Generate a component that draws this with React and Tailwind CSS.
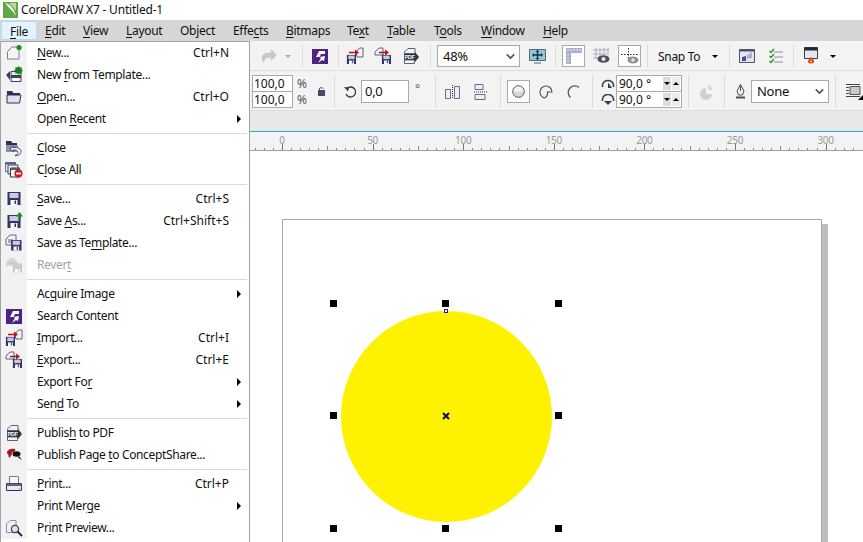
import { ChevronDown } from 'lucide-react';

const topMenu = [
  { label: '&File', box: 'w-[36px] pl-[8px] bg-[#e5f3fd] border border-[#b5daf5]' },
  { label: '&Edit', box: 'w-[38px] pl-[8px]' },
  { label: '&View', box: 'w-[43px] pl-[8px]' },
  { label: '&Layout', box: 'w-[54px] pl-[8px]' },
  { label: 'Ob&ject', box: 'w-[53px] pl-[8px]' },
  { label: 'Effe&cts', box: 'w-[53px] pl-[8px]' },
  { label: '&Bitmaps', box: 'w-[61px] pl-[8px]' },
  { label: 'Te&xt', box: 'w-[40px] pl-[8px]' },
  { label: '&Table', box: 'w-[47px] pl-[8px]' },
  { label: 'T&ools', box: 'w-[47px] pl-[8px]' },
  { label: '&Window', box: 'w-[62px] pl-[8px]' },
  { label: '&Help', box: 'w-[40px] pl-[8px]' },
];

function Label({ text }) {
  const i = text.indexOf('&');
  if (i < 0) return <span>{text}</span>;
  return (
    <span>
      {text.slice(0, i)}
      <u className="underline-offset-2">{text[i + 1]}</u>
      {text.slice(i + 2)}
    </span>
  );
}

// small floppy used by a lot of the menu icons
function Floppy({ x = 0, y = 0, s = 1, c = '#2f3567' }) {
  return (
    <g transform={`translate(${x} ${y}) scale(${s})`}>
      <path d="M2 2h13v13H2z" fill={c} />
      <path d="M4 3h9v5H4z" fill="#c9cce0" />
      <path d="M5 10h7v5H5z" fill="#fff" />
      <path d="M9 10.5h1.6v3.5H9z" fill={c} />
    </g>
  );
}

function Doc({ x = 0, y = 0, c = '#6c7183', f = '#f4f4f6' }) {
  return <path transform={`translate(${x} ${y})`} d="M.5 4.500 4.500.5h6v10H.5z" fill={f} stroke={c} strokeWidth="1" />;
}

function Arrow({ x = 0, y = 0 }) {
  return <path transform={`translate(${x} ${y})`} d="M0 2.200h6V0l4 3-4 3V3.800H0z" fill="#b5121b" />;
}

function Ico({ children, w = 18, h = 18 }) {
  return (
    <svg width={w} height={h} viewBox={`0 0 ${w} ${h}`} className="block shrink-0">
      {children}
    </svg>
  );
}

const searchIcon = (
  <Ico w={17} h={17}>
    <path d="M0 1h16v15H0z" fill="#4b2384" />
    <path d="M13 3H7L4 9h3.500L9 6h4z" fill="#fff" />
    <path d="M13 8l-1 5-2-1-4 3 3-5-1.500-1z" fill="#fff" />
  </Ico>
);

const icons = {
  new: (
    <Ico>
      <path d="M2.500 7.500 7 3h7v12H2.500z" fill="#f5f5f7" stroke="#7b7f90" />
      <circle cx="14" cy="3.500" r="2.600" fill="#1f8a1f" />
    </Ico>
  ),
  template: (
    <Ico>
      <path d="M1 9l4-4v9z" fill="#3a4060" />
      <path d="M6 5.500h10v10H6z" fill="#e8e9ef" stroke="#3a4060" />
      <path d="M6 9h10v3H6z" fill="#3a4060" />
      <path d="M8 12.500h6v2H8z" fill="#fff" />
      <path d="M13.500 0l1.200 1.600 2-.4-.2 2 1.500 1.300-1.500 1.200.2 2-2-.4-1.200 1.600-1.200-1.600-2 .4.2-2L9 4.500l1.500-1.300-.2-2 2 .4z" fill="#1c7d1c" />
    </Ico>
  ),
  open: (
    <Ico>
      <path d="M2 3h5l1.500 2H15v3H2z" fill="#2b3158" />
      <path d="M2 7h14l-1.500 8H2z" fill="#dfe1ea" stroke="#2b3158" />
    </Ico>
  ),
  close: (
    <Ico>
      <path d="M1 2h5l1.500 2H12v3H1z" fill="#2b3158" />
      <path d="M1 6h12l-1 7H1z" fill="#8d92ab" />
      <path d="M8 7.500 5 10l3 2.500V11c3-.5 5 .6 5 2.500 0 1.600-1.400 2.800-3 3 3.500.5 6-1.400 6-3.800 0-3-3-4.600-8-4.200z" fill="#fff" stroke="#2b3158" strokeWidth=".9" />
    </Ico>
  ),
  closeAll: (
    <Ico>
      <path d="M.5 1.500h10v9H.5z" fill="#eee" stroke="#6c7183" />
      <path d="M3 4h10v9H3z" fill="#eee" stroke="#3a4060" />
      <path d="M5.500 7h9v9h-9z" fill="#f6f6f6" stroke="#2b3158" />
      <path d="M.5 1.500h10v2H.5zM5.500 7h9v2h-9z" fill="#565b78" />
      <circle cx="13.500" cy="12.500" r="4" fill="#d8141c" />
      <path d="M11 11.600h5v1.800h-5z" fill="#fff" />
    </Ico>
  ),
  save: (
    <Ico>
      <Floppy x={0.5} y={0} />
    </Ico>
  ),
  saveAs: (
    <Ico>
      <Floppy x={0.5} y={1} />
      <path d="M13 0h2.500v2.500H18L14.500 7 11 2.500h2z" transform="rotate(180 14.500 3.500)" fill="#1f8a1f" />
    </Ico>
  ),
  saveTemplate: (
    <Ico>
      <Doc x={0.5} y={0.5} c="#5d6278" />
      <path d="M3 6h5M3 8h4" stroke="#5d6278" />
      <Floppy x={4.5} y={4.5} s={0.8} />
    </Ico>
  ),
  revert: (
    <Ico>
      <path d="M1 6 5 2h5v8H1z" fill="#d6d6d6" />
      <path d="M4 6h6V4l3 3-3 3V8H4z" fill="#c9c9c9" />
      <Floppy x={6.5} y={6} s={0.7} c="#c9c9c9" />
    </Ico>
  ),
  search: searchIcon,
  import: (
    <Ico>
      <path d="M10 5 13.500 1H17v9h-6z" fill="#f2f2f5" stroke="#5d6278" />
      <Arrow x={3} y={2.5} />
      <Floppy x={-0.5} y={6.5} s={0.7} />
    </Ico>
  ),
  export: (
    <Ico>
      <path d="M1 5 5 1h4v7H1z" fill="#f2f2f5" stroke="#5d6278" />
      <Arrow x={5} y={2.5} />
      <Floppy x={6.5} y={6.5} s={0.7} />
    </Ico>
  ),
  pdf: (
    <Ico>
      <path d="M2.500 5 6 1.500h7v5H2.500z" fill="#f4f4f6" stroke="#5d6278" />
      <path d="M2 7h11V5l4 5-4 5v-2H2z" fill="#2b2f45" />
      <text x="2.500" y="12.200" fontSize="5.500" fontWeight="700" fill="#fff" fontFamily="Liberation Sans, sans-serif">PDF</text>
      <path d="M2.500 13v3.500h10V13z" fill="#f4f4f6" stroke="#5d6278" />
    </Ico>
  ),
  concept: (
    <Ico>
      <path d="M2 6c1-3 5-4 8-3 1 2-1 3-3 3.500 0 2-1 4-3 5.500-.5-2-.5-3-1-4-1 0-1-1-1-2z" fill="#a5161c" />
      <ellipse cx="11.500" cy="8" rx="4" ry="2.800" fill="#111" />
      <path d="M14 10l3 4-4-2.500z" fill="#111" />
    </Ico>
  ),
  print: (
    <Ico>
      <path d="M4.500 1.500h9v7h-9z" fill="#f7f7f7" stroke="#777c8c" />
      <path d="M1.500 8.500h15v7h-15z" fill="#e8e9ee" stroke="#2b3158" />
      <path d="M1.500 8.500h15V11h-15z" fill="#5e6480" />
      <path d="M13.500 13h2v1h-2z" fill="#e5b320" />
    </Ico>
  ),
  preview: (
    <Ico>
      <path d="M1.500 5 5 1.500h6v12H1.500z" fill="#f0f0f4" stroke="#8a8fa2" />
      <circle cx="10" cy="10" r="3.600" fill="#dfe3ec" stroke="#3a4060" strokeWidth="1.300" />
      <path d="M12.500 12.500l4.500 4.500" stroke="#2b2f45" strokeWidth="2" />
    </Ico>
  ),
};

const menuGroups = [
  [
    { icon: 'new', label: '&New...', keys: 'Ctrl+N' },
    { icon: 'template', label: 'New &from Template...' },
    { icon: 'open', label: '&Open...', keys: 'Ctrl+O' },
    { label: 'Open &Recent', sub: true },
  ],
  [
    { icon: 'close', label: '&Close' },
    { icon: 'closeAll', label: 'C&lose All' },
  ],
  [
    { icon: 'save', label: '&Save...', keys: 'Ctrl+S' },
    { icon: 'saveAs', label: 'Save &As...', keys: 'Ctrl+Shift+S' },
    { icon: 'saveTemplate', label: 'Save as Te&mplate...' },
    { icon: 'revert', label: 'Rever&t', off: true },
  ],
  [
    { label: 'Ac&quire Image', sub: true },
    { icon: 'search', label: 'Search Content' },
    { icon: 'import', label: '&Import...', keys: 'Ctrl+I' },
    { icon: 'export', label: '&Export...', keys: 'Ctrl+E' },
    { label: 'Export Fo&r', sub: true },
    { label: 'Sen&d To', sub: true },
  ],
  [
    { icon: 'pdf', label: 'Publis&h to PDF' },
    { icon: 'concept', label: 'Publish Page &to ConceptShare...' },
  ],
  [
    { icon: 'print', label: '&Print...', keys: 'Ctrl+P' },
    { label: 'Print Mer&ge', sub: true },
    { icon: 'preview', label: 'Pr&int Preview...' },
  ],
];

function MenuRow({ item }) {
  return (
    <div className={`flex h-[22px] items-center ${item.off ? 'text-[#a3a3a3]' : 'text-[#111]'}`}>
      <div className="flex h-full w-[26px] shrink-0 items-center justify-center bg-[#f2f2f2]">
        {item.icon && icons[item.icon]}
      </div>
      <div className="ml-[10px] flex-1 whitespace-nowrap tracking-[-0.35px]">
        <Label text={item.label} />
      </div>
      {item.keys && <div className="mr-[20px] whitespace-nowrap tracking-normal">{item.keys}</div>}
      {item.sub && <div className="mr-[8px] h-0 w-0 border-y-[4px] border-l-[4px] border-y-transparent border-l-black" />}
    </div>
  );
}

function FileMenu() {
  return (
    <div className="absolute bottom-0 left-0 top-[41px] z-10 w-[250px] border-x border-t border-[#a3a3a3] bg-white">
      {menuGroups.map((group, i) => (
        <div key={i}>
          {i > 0 && (
            <div className="flex h-[7px]">
              <div className="w-[26px] bg-[#f2f2f2]" />
              <div className="mr-[2px] mt-[3px] h-px flex-1 bg-[#d9d9d9]" />
            </div>
          )}
          {group.map((item) => (
            <MenuRow key={item.label} item={item} />
          ))}
        </div>
      ))}
    </div>
  );
}

function Sep({ cls }) {
  return <div className={`w-px shrink-0 self-stretch bg-[#dcdcdc] ${cls}`} />;
}

function Caret({ cls, dim }) {
  return (
    <div className={`h-0 w-0 shrink-0 border-x-[3px] border-t-[3px] border-x-transparent ${dim ? 'border-t-[#a9a9a9]' : 'border-t-black'} ${cls}`} />
  );
}

function Combo({ text, cls }) {
  return (
    <div className={`flex shrink-0 items-center justify-between border border-[#a9a9a9] bg-white pl-[5px] pr-[2px] ${cls}`}>
      <span className="pt-px text-[13px]">{text}</span>
      <ChevronDown size={13} strokeWidth={3} className="text-[#555]" />
    </div>
  );
}

function Spin() {
  return (
    <div className="flex h-full items-center gap-px pr-px">
      <div className="flex h-[13px] w-[8px] items-center justify-center bg-[#dcdcdc]">
        <div className="h-0 w-0 border-x-[3px] border-t-[3px] border-x-transparent border-t-black" />
      </div>
      <div className="flex h-[13px] w-[8px] items-center justify-center bg-[#ececec]">
        <div className="h-0 w-0 border-x-[3px] border-b-[3px] border-x-transparent border-b-black" />
      </div>
    </div>
  );
}

function ToolbarTop() {
  return (
    <div className="flex h-[29px] items-center bg-[#f3f3f3] pb-[3px] pl-[250px] pt-[4px]">
      <div className="ml-[11px] shrink-0">
        <svg width="16" height="15" viewBox="0 0 16 15" className="block">
          <path d="M10 0l6 6-6 6V8.500C6 8 3.500 9.500 3 14 1 11.500 0 9.500 1 7c1-2.500 4-3.500 9-3.500z" fill="#c8c8c8" />
        </svg>
      </div>
      <Caret dim cls="ml-[8px]" />
      <Sep cls="ml-[11px]" />
      <div className="ml-[9px] shrink-0">{searchIcon}</div>
      <Sep cls="ml-[9px]" />
      <div className="ml-[7px] shrink-0">{icons.import}</div>
      <div className="ml-[10px] shrink-0">{icons.export}</div>
      <div className="ml-[10px] shrink-0">{icons.pdf}</div>
      <Sep cls="ml-[10px]" />
      <Combo text="48%" cls="ml-[6px] h-[22px] w-[83px]" />
      <div className="ml-[9px] shrink-0">
        <svg width="17" height="17" viewBox="0 0 17 17" className="block">
          <path d="M.5 1.500h16v11H.5z" fill="#8ccbd6" stroke="#5b6478" />
          <path d="M8.500 3v8M4 7h9" stroke="#1f2a44" strokeWidth="1.400" />
          <path d="M8.500 2l2 2h-4zM8.500 12l2-2h-4zM3 7l2-2v4zM14 7l-2-2v4z" fill="#1f2a44" />
          <path d="M5 15h7" stroke="#8a8fa2" strokeWidth="1.500" />
        </svg>
      </div>
      <Sep cls="ml-[9px]" />
      <div className="ml-[6px] flex h-[22px] w-[23px] shrink-0 items-center justify-center border border-[#a9a9a9] bg-white">
        <svg width="16" height="16" viewBox="0 0 16 16" className="block">
          <path d="M0 0h16v5H5v11H0z" fill="#a9afc6" />
          <path d="M2 1v2M5 1v2M8 1v2M11 1v2M14 1v2M1 7h2M1 10h2M1 13h2" stroke="#eef0f6" />
        </svg>
      </div>
      <div className="ml-[8px] shrink-0">
        <svg width="17" height="16" viewBox="0 0 17 16" className="block">
          <path d="M3 0v11M7 0v11M11 0v7M15 0v5M0 2h16M0 6h16M0 10h8" stroke="#a9a9c8" />
          <ellipse cx="10.500" cy="11" rx="6" ry="3.800" fill="#4c4f5d" />
          <circle cx="10.500" cy="11" r="2" fill="#e7e7e7" />
        </svg>
      </div>
      <div className="ml-[8px] flex h-[22px] w-[23px] shrink-0 items-center justify-center border border-[#a9a9a9] bg-white">
        <svg width="18" height="17" viewBox="0 0 18 17" className="block">
          <path d="M0 6.500h18M7.500 0v12" stroke="#222" strokeDasharray="1.500 1.500" />
          <ellipse cx="12" cy="12" rx="5.500" ry="3.500" fill="#8d8f98" />
          <circle cx="12" cy="12" r="1.800" fill="#e4e4e4" />
        </svg>
      </div>
      <Sep cls="ml-[6px]" />
      <div className="ml-[10px] w-[43px] shrink-0 whitespace-nowrap pt-px text-[#111]">Snap To</div>
      <Caret cls="ml-[11px]" />
      <Sep cls="ml-[11px]" />
      <div className="ml-[9px] shrink-0">
        <svg width="16" height="16" viewBox="0 0 16 16" className="block">
          <path d="M.5 1.500h15v13H.5z" fill="#e5e6ec" stroke="#4d5268" />
          <path d="M.5 1.500h15v2H.5z" fill="#4d5268" />
          <path d="M3 13V9l4-1v5z" fill="#3b4f9c" />
          <path d="M8 11V7l5-3v6z" fill="#a8b0d0" />
        </svg>
      </div>
      <div className="ml-[14px] shrink-0">
        <svg width="14" height="17" viewBox="0 0 14 17" className="block">
          <path d="M5 4h9M5 9h9M5 14h9" stroke="#8a8fa2" />
          <path d="M.5 3l1.500 1.500L5 1M.5 8l1.500 1.500L5 6M.5 13l1.500 1.500L5 11" stroke="#2f8a2f" fill="none" strokeWidth="1.300" />
        </svg>
      </div>
      <Sep cls="ml-[10px]" />
      <div className="ml-[10px] shrink-0">
        <svg width="15" height="18" viewBox="0 0 15 18" className="block">
          <path d="M.5.500h13v11H.5z" fill="#e6e7ee" stroke="#3a3e52" />
          <path d="M.5.500h13v3H.5z" fill="#23263a" />
          <path d="M7 10c2 1 3.500 3 3 5-.5 2-5.500 2-6 0-.4-2 1.500-3 3-5z" fill="#e8461e" />
          <path d="M7 13c.8.600 1.200 1.500 1 2.300H6c-.2-.8 0-1.500 1-2.300z" fill="#f8c21c" />
        </svg>
      </div>
      <Caret cls="ml-[11px]" />
    </div>
  );
}

function ToolbarBottom() {
  return (
    <div className="flex h-[41px] items-center border-y border-[#dcdcdc] bg-[#f3f3f3] pb-[2px] pl-[250px] pt-[4px]">
      <div className="ml-[2px] flex h-[33px] w-[41px] shrink-0 flex-col border border-[#a9a9a9] bg-white leading-[16px] tracking-normal">
        <div className="h-[16px] border-b border-[#a9a9a9] pl-px">100,0</div>
        <div className="h-[15px] pl-px">100,0</div>
      </div>
      <div className="ml-[4px] w-[10px] shrink-0 leading-[16px] text-[#555]">
        <div>%</div>
        <div>%</div>
      </div>
      <div className="ml-[11px] shrink-0">
        <svg width="7" height="9" viewBox="0 0 7 9" className="block">
          <path d="M0 3h7v6H0z" fill="#454a68" />
          <path d="M1.500 3V1.500C1.500.5 5 .5 5.500 1.500" stroke="#454a68" fill="none" />
        </svg>
      </div>
      <Sep cls="ml-[9px]" />
      <div className="ml-[9px] shrink-0">
        <svg width="12" height="13" viewBox="0 0 12 13" className="block">
          <path d="M3 3.500A5 5 0 1 1 2 9" fill="none" stroke="#333" strokeWidth="1.300" />
          <path d="M0 2l5 .5-1 4z" fill="#333" />
        </svg>
      </div>
      <div className="ml-[5px] flex h-[23px] w-[48px] shrink-0 items-center border border-[#a9a9a9] bg-white pl-[3px] text-[13px]">0,0</div>
      <div className="mb-[5px] ml-[6px] w-[6px] shrink-0 text-[#666]">°</div>
      <Sep cls="ml-[14px]" />
      <div className="ml-[9px] shrink-0">
        <svg width="15" height="14" viewBox="0 0 15 14" className="block">
          <path d="M.5 3.500h5v9h-5zM9.500.5h5v12h-5z" transform="translate(0 1)" fill="#eceef4" stroke="#6a6f88" />
          <path d="M7.500 0v14" stroke="#333" strokeDasharray="1 1" />
        </svg>
      </div>
      <div className="ml-[14px] shrink-0">
        <svg width="14" height="16" viewBox="0 0 14 16" className="block">
          <path d="M1 .5h8v5H1zM1 10.500h10v5H1z" fill="#eceef4" stroke="#6a6f88" />
          <path d="M0 8h14" stroke="#333" strokeDasharray="1 1" />
        </svg>
      </div>
      <Sep cls="ml-[12px]" />
      <div className="ml-[6px] flex h-[23px] w-[23px] shrink-0 items-center justify-center border border-[#a9a9a9] bg-white">
        <svg width="13" height="13" viewBox="0 0 13 13" className="block">
          <path d="M1 6.500a5.500 5.500 0 0 1 11 0z" fill="#f2f2f4" />
          <path d="M1 6.500a5.500 5.500 0 0 0 11 0z" fill="#d5d7e0" />
          <circle cx="6.500" cy="6.500" r="5.800" fill="none" stroke="#555" />
        </svg>
      </div>
      <div className="ml-[9px] shrink-0">
        <svg width="14" height="14" viewBox="0 0 14 14" className="block">
          <path d="M1 7a6 6 0 0 1 12 0H8.500v1.500C8.500 11 6.500 13 5 13 3 12 1 10 1 7z" fill="#f2f2f4" stroke="#555" strokeWidth="1.200" />
        </svg>
      </div>
      <div className="ml-[14px] shrink-0">
        <svg width="14" height="14" viewBox="0 0 14 14" className="block">
          <path d="M3.500 12.500A6 6 0 1 1 12 2.500" fill="none" stroke="#555" strokeWidth="1.300" />
        </svg>
      </div>
      <Sep cls="ml-[11px]" />
      <div className="ml-[8px] flex w-[14px] shrink-0 flex-col gap-[4px]">
        <svg width="14" height="11" viewBox="0 0 14 11" className="block">
          <path d="M1.500 8V6a5.500 4.500 0 0 1 11 0v2" fill="none" stroke="#3a3e52" strokeWidth="1.500" />
          <path d="M7 3.500 11 9H7z" fill="#3a3e52" />
        </svg>
        <svg width="14" height="11" viewBox="0 0 14 11" className="block">
          <path d="M1.500 7V5a5.500 4.500 0 0 1 11 0v2" fill="none" stroke="#3a3e52" strokeWidth="1.500" />
          <path d="M3 7h8L7 11z" fill="#3a3e52" />
        </svg>
      </div>
      <div className="ml-px flex h-[33px] w-[66px] shrink-0 flex-col border border-[#a9a9a9] bg-white leading-[16px] tracking-normal">
        <div className="flex h-[16px] items-center justify-between border-b border-[#a9a9a9] pl-[2px]">
          <span>90,0 °</span>
          <Spin />
        </div>
        <div className="flex h-[15px] items-center justify-between pl-[2px]">
          <span>90,0 °</span>
          <Spin />
        </div>
      </div>
      <Sep cls="ml-[6px]" />
      <div className="ml-[11px] shrink-0">
        <svg width="13" height="16" viewBox="0 0 13 16" className="block">
          <path d="M6 4a6 6 0 1 0 6 6H6z" fill="#d0d0d0" />
          <path d="M8 1a5 5 0 0 1 4 5H9z" fill="#d0d0d0" />
        </svg>
      </div>
      <Sep cls="ml-[11px]" />
      <div className="ml-[11px] shrink-0">
        <svg width="9" height="15" viewBox="0 0 9 15" className="block">
          <path d="M4.500.5 8 7l-1.500 4h-4L1 7zM4.500 1v6" fill="#f2f2f2" stroke="#4a4d5e" />
          <path d="M0 12.500h9v2H0z" fill="#4a4d5e" />
        </svg>
      </div>
      <Combo text="None" cls="ml-[6px] h-[23px] w-[78px]" />
      <Sep cls="ml-[6px]" />
      <div className="ml-[10px] shrink-0">
        <svg width="17" height="17" viewBox="0 0 17 17" className="block">
          <path d="M0 1.500h14M0 4.500h3M0 7.500h3M0 10.500h3M0 13.500h14" stroke="#444" />
          <path d="M4 3.500h10v8H4z" fill="#c7c9d0" stroke="#555" />
          <path d="M17 12v5h-5z" fill="#000" />
        </svg>
      </div>
    </div>
  );
}

const rulerLabels = [0, 50, 100, 150, 200, 250, 300];
const rulerTicks = Array.from({ length: 68 }, (_, i) => i - 4);

function Ruler() {
  return (
    <div className="h-[19px] border-b border-[#a0a0a0] bg-[#f3f3f3]">
      <svg width="863" height="18" viewBox="0 0 863 18" className="block">
        {rulerTicks.map((i) => {
          const x = Math.round(282 + i * 9.06);
          const major = i % 10 === 0;
          const mid = i % 5 === 0;
          return <path key={i} d={`M${x + 0.5} ${major ? 12 : mid ? 14 : 16}V18`} stroke={major ? '#777' : '#888'} />;
        })}
        {rulerLabels.map((n) => (
          <text key={n} x={282 + n * 1.812} y="12" textAnchor="middle" fontSize="10" fill="#9a9a9a" fontFamily="Noto Sans, sans-serif">
            {n}
          </text>
        ))}
      </svg>
    </div>
  );
}

function Handle({ pos }) {
  return <div className={`absolute h-[7px] w-[7px] bg-black ${pos}`} />;
}

function Canvas() {
  return (
    <div className="relative h-[391px] overflow-hidden bg-white">
      <div className="absolute left-[822px] top-[73px] h-[330px] w-[6px] bg-[#bdbdbd]" />
      <div className="absolute left-[282px] top-[68px] h-[340px] w-[540px] border border-[#a9a9a9] bg-white" />
      <div className="absolute left-[341px] top-[160px] h-[211px] w-[211px] rounded-full bg-[#fff200]" />
      <Handle pos="left-[330px] top-[149px]" />
      <Handle pos="left-[442px] top-[149px]" />
      <Handle pos="left-[555px] top-[149px]" />
      <Handle pos="left-[330px] top-[261px]" />
      <Handle pos="left-[555px] top-[261px]" />
      <Handle pos="left-[330px] top-[374px]" />
      <Handle pos="left-[442px] top-[374px]" />
      <Handle pos="left-[555px] top-[374px]" />
      <div className="absolute left-[444px] top-[158px] h-[4px] w-[4px] border border-[#1a1ab0] bg-white" />
      <svg width="8" height="8" viewBox="0 0 8 8" className="absolute left-[442px] top-[261px] block">
        <path d="M1 1l6 6M7 1 1 7" stroke="#0b0b60" strokeWidth="2" />
      </svg>
    </div>
  );
}

export default function App() {
  return (
    <div className="relative h-[542px] w-[863px] overflow-hidden bg-white font-['Noto_Sans',sans-serif] text-[12px] tracking-[-0.3px] text-[#111]">
      <div className="flex h-[20px] items-center bg-white pl-[3px]">
        <svg width="15" height="16" viewBox="0 0 15 16" className="block">
          <path d="M0 0h15v16H0z" fill="#5fa845" />
          <path d="M2 1c5 1 9 5 11 13C10 9 6 6 2 1z" fill="#fff" />
          <path d="M6 1h7v8C11 6 9 3 6 1z" fill="#b9dc9a" />
        </svg>
        <div className="ml-[3px] whitespace-nowrap tracking-[-0.2px]">CorelDRAW X7 - Untitled-1</div>
      </div>
      <div className="flex h-[21px] items-center bg-[#d6d6d6] pl-px">
        {topMenu.map((m) => (
          <div key={m.label} className={`h-[19px] shrink-0 whitespace-nowrap leading-[19px] ${m.box}`}>
            <Label text={m.label} />
          </div>
        ))}
      </div>
      <ToolbarTop />
      <ToolbarBottom />
      <div className="h-[20px] bg-[#e8e8e8]" />
      <div className="h-px bg-[#2ea3e0]" />
      <Ruler />
      <Canvas />
      <FileMenu />
    </div>
  );
}
